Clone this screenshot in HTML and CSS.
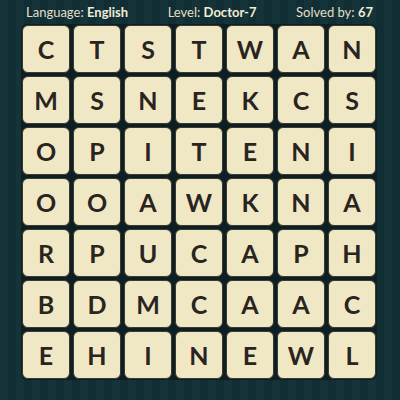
FILE: index.html
```html
<!DOCTYPE html>
<html>
<head lang="en">
    <meta charset="UTF-8">
    <title>Word Grid</title>
    <link rel="stylesheet" href="styles.css">
</head>
<body>
<div id="header">
    <span>Language: <b>English</b></span>
    <span>Level: <b>Doctor-7</b></span>
    <span>Solved by: <b>67</b></span>
</div>
<div id="board">
    <div class="tile">C</div><div class="tile">T</div><div class="tile">S</div><div class="tile">T</div><div class="tile">W</div><div class="tile">A</div><div class="tile">N</div>
    <div class="tile">M</div><div class="tile">S</div><div class="tile">N</div><div class="tile">E</div><div class="tile">K</div><div class="tile">C</div><div class="tile">S</div>
    <div class="tile">O</div><div class="tile">P</div><div class="tile">I</div><div class="tile">T</div><div class="tile">E</div><div class="tile">N</div><div class="tile">I</div>
    <div class="tile">O</div><div class="tile">O</div><div class="tile">A</div><div class="tile">W</div><div class="tile">K</div><div class="tile">N</div><div class="tile">A</div>
    <div class="tile">R</div><div class="tile">P</div><div class="tile">U</div><div class="tile">C</div><div class="tile">A</div><div class="tile">P</div><div class="tile">H</div>
    <div class="tile">B</div><div class="tile">D</div><div class="tile">M</div><div class="tile">C</div><div class="tile">A</div><div class="tile">A</div><div class="tile">C</div>
    <div class="tile">E</div><div class="tile">H</div><div class="tile">I</div><div class="tile">N</div><div class="tile">E</div><div class="tile">W</div><div class="tile">L</div>
</div>
</body>
</html>
```

FILE: styles.css
```css
body, html {
    margin: 0;
    height: 100%;
    width: 100%;
    overflow: hidden;
}

body {
    background: repeating-linear-gradient(90deg, #143439 0px, #143439 8px, #102e34 8px, #102e34 16px);
    font-family: Lato, "Open Sans", sans-serif;
}

#header {
    display: flex;
    justify-content: space-between;
    padding: 2px 27px 0 26px;
    height: 20px;
    line-height: 20px;
    color: #e4dfc6;
    font-size: 13px;
}

#header b {
    font-weight: 700;
    color: #f1ecd4;
}

/* Letter grid */
#board {
    display: grid;
    grid-template-columns: repeat(7, 48px);
    grid-auto-rows: 48px;
    gap: 3px;
    width: max-content;
    margin: 2px 0 0 21px;
    padding: 1px;
    background-color: #0d1f22;
    border-radius: 6px;
}

.tile {
    display: flex;
    align-items: center;
    justify-content: center;
    background-color: #f0e8c5;
    border: 1px solid #3a3a30;
    box-sizing: border-box;
    border-radius: 6px;
    color: #2a2421;
    font-size: 25px;
    font-weight: 700;
}
```
